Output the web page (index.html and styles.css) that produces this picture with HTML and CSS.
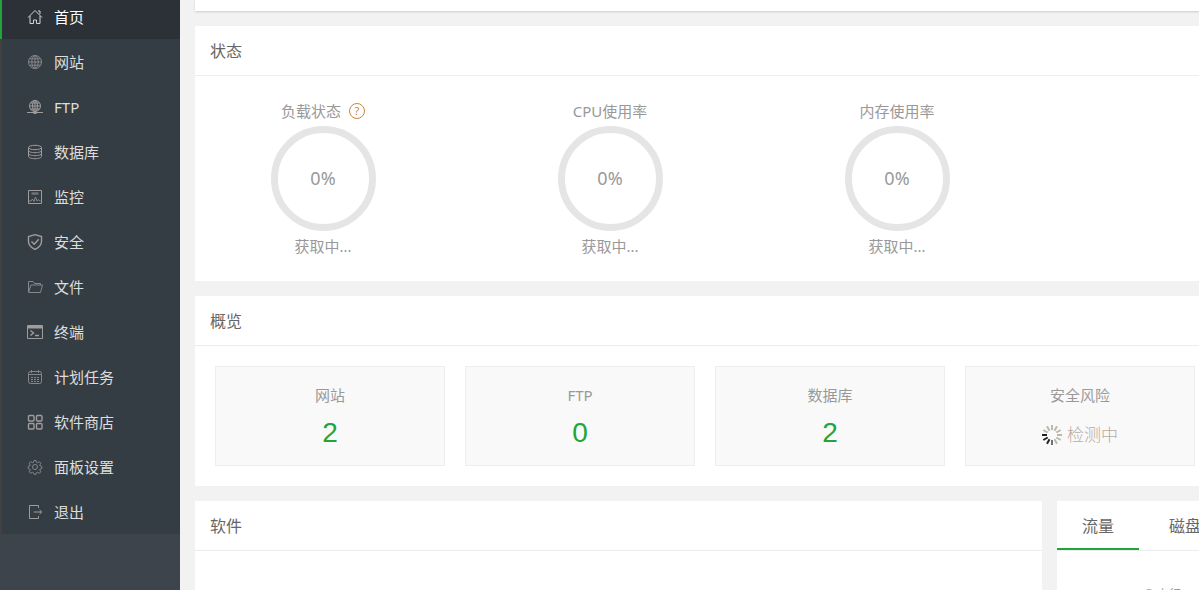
FILE: index.html
```html
<!DOCTYPE html>
<html lang="zh-CN">
<head>
	<meta charset="utf-8">
	<title>首页</title>
	<link rel="stylesheet" href="styles.css">
</head>
<body>
	<div class="layout">
		<nav class="sidebar">
			<ul class="menu">
				<li class="current"><a href="#home">
					<svg class="icon" viewBox="0 0 16 16"><path d="M1 8.5 8 1.5l7 7M3 7v7.5h3.5V11h3v3.5H13V7M11 2h2v3"/></svg>首页</a></li>
				<li><a href="#site">
					<svg class="icon dim" viewBox="0 0 16 16"><circle cx="8" cy="8" r="6.5"/><ellipse cx="8" cy="8" rx="3.2" ry="6.5"/><path d="M8 1.5v13M1.5 8h13M2.5 4.8h11M2.5 11.2h11"/></svg>网站</a></li>
				<li><a href="#ftp">
					<svg class="icon" viewBox="0 0 16 16"><circle cx="8" cy="7" r="5.5"/><ellipse cx="8" cy="7" rx="2.5" ry="5.5"/><path d="M8 1.5v12M2.5 7h11M3.5 4h9M3.5 10h9M0 13.5h16M6.5 14.5h3"/></svg>FTP</a></li>
				<li><a href="#database">
					<svg class="icon" viewBox="0 0 16 16"><ellipse cx="8" cy="3.5" rx="6.5" ry="2.2"/><path d="M1.5 3.5v9c0 1.2 2.9 2.2 6.5 2.2s6.5-1 6.5-2.2v-9M1.5 6.5c0 1.2 2.9 2.2 6.5 2.2s6.5-1 6.5-2.2M1.5 9.5c0 1.2 2.9 2.2 6.5 2.2s6.5-1 6.5-2.2"/></svg>数据库</a></li>
				<li><a href="#control">
					<svg class="icon dim" viewBox="0 0 16 16"><path stroke="#a09c9c" d="M1.5 1.5h13v13h-13z"/><path d="M4.500 4h7M4.500 5h7M2 12h2l1.500-2 1.500 2.500 1.500-4.500 1.500 4 1.500-1.500 1 1.500h1"/></svg>监控</a></li>
				<li><a href="#firewall">
					<svg class="icon bold" viewBox="0 0 16 16"><path d="M8 .7 14.5 2.5v5c0 3.500-2.500 6-6.500 8-4-2-6.500-4.500-6.500-8v-5zM4.500 7.500l2.700 2.800 4.500-5"/></svg>安全</a></li>
				<li><a href="#files">
					<svg class="icon dim" viewBox="0 0 16 16"><path d="M1.500 13V2.500h4.500l1.500 2h6V6M1.500 13.500 4 6h11.500l-2 7.500z"/></svg>文件</a></li>
				<li><a href="#term">
					<svg class="icon" viewBox="0 0 16 16"><path d="M.5 1.500h15v13H.5z"/><path d="M1 3h14" stroke-width="3"/><path class="bold" d="M3.500 6.500l3 2.500-3 2.500M8 11.500h4"/></svg>终端</a></li>
				<li><a href="#crontab">
					<svg class="icon dim" viewBox="0 0 16 16"><rect x="1.5" y="2.5" width="13" height="12" rx="2"/><path d="M4.500 1v3M11.500 1v3M1.500 5.500h13"/><path stroke-dasharray="2 1" d="M4 8.500h9M4 10.500h9M4 12.500h9"/></svg>计划任务</a></li>
				<li><a href="#soft">
					<svg class="icon bold" viewBox="0 0 16 16"><rect x="1.5" y="1.5" width="5.5" height="5.5" rx="1"/><rect x="9.5" y="1.5" width="5.5" height="5.5" rx="1"/><rect x="1.5" y="9.5" width="5.5" height="5.5" rx="1"/><rect x="9.5" y="9.5" width="5.5" height="5.5" rx="1"/></svg>软件商店</a></li>
				<li><a href="#config">
					<svg class="icon dim" viewBox="0 0 16 16"><circle cx="8" cy="8" r="2.5"/><path d="M6.500 3.300 7 1.500h2l.5 1.800 1 .4 1.800-1 1.500 1.500-1 1.800.4 1 1.600.5v2l-1.600.5-.4 1 1 1.800-1.500 1.500-1.800-1-1 .4-.5 1.600H7l-.5-1.600-1-.4-1.800 1-1.500-1.500 1-1.800-.4-1-1.600-.5v-2l1.600-.5.4-1-1-1.800 1.500-1.500 1.800 1z"/></svg>面板设置</a></li>
				<li><a href="#logout">
					<svg class="icon" viewBox="0 0 16 16"><path d="M11.500 4V1.500h-9v13h9V12M6.500 8h8M12.500 6l2.300 2-2.300 2"/></svg>退出</a></li>
			</ul>
		</nav>
		<main class="main">
			<div class="topbar"></div>
			<section class="panel">
				<h2 class="panel-title">状态</h2>
				<div class="gauges">
					<div class="gauge">
						<h3>负载状态 <a class="help" href="#help">?</a></h3>
						<div class="ring">0%</div>
						<p>获取中...</p>
					</div>
					<div class="gauge">
						<h3>CPU使用率</h3>
						<div class="ring">0%</div>
						<p>获取中...</p>
					</div>
					<div class="gauge">
						<h3>内存使用率</h3>
						<div class="ring">0%</div>
						<p>获取中...</p>
					</div>
				</div>
			</section>
			<section class="panel">
				<h2 class="panel-title">概览</h2>
				<div class="cards">
					<div class="card"><h3>网站</h3><a class="count" href="#site">2</a></div>
					<div class="card"><h3>FTP</h3><a class="count" href="#ftp">0</a></div>
					<div class="card"><h3>数据库</h3><a class="count" href="#database">2</a></div>
					<div class="card">
						<h3>安全风险</h3>
						<div class="checking">
							<svg class="spinner" viewBox="0 0 20 20">
								<path stroke="#b9b9ae" d="M10 0v5M15 1.300l-2.500 4.400M18.700 5l-4.400 2.500M20 10h-5M18.700 15l-4.400-2.500M15 18.700l-2.500-4.400M5 1.300l2.500 4.400M1.300 5l4.400 2.500"/>
								<path stroke="#77706e" d="M10 20v-5"/>
								<path stroke="#222" d="M0 10h5M1.300 15l4.400-2.500M5 18.700l2.500-4.400"/>
							</svg>检测中
						</div>
					</div>
				</div>
			</section>
			<div class="bottom">
				<section class="panel">
					<h2 class="panel-title">软件</h2>
				</section>
				<section class="panel">
					<div class="tabs">
						<button class="tab on" type="button">流量</button>
						<button class="tab" type="button">磁盘IO</button>
					</div>
					<div class="legend"><span class="dot"></span>上行</div>
				</section>
			</div>
		</main>
	</div>
</body>
</html>
```
FILE: styles.css
```css
* { box-sizing: border-box; }
body { margin: 0; overflow: hidden; background: #f2f2f2; color: #999; font: 15px/20px "Noto Sans", "Noto Sans CJK SC", sans-serif; }
h2, h3, p, ul { margin: 0; padding: 0; font-weight: normal; }
a { text-decoration: none; }
.layout { display: flex; height: 100vh; overflow: hidden; }

/* sidebar */
.sidebar { flex: none; width: 180px; background: #3d444b; }
.menu { list-style: none; margin-top: -6px; }
.menu li { height: 45px; background: #353d44; border-left: 2px solid #444040; }
.menu a { display: flex; align-items: center; gap: 11px; height: 45px; padding-left: 25px; color: #ddd; }
.menu .current { background: #2c3138; border-left-color: #20a53a; }
.menu .current a { color: #fff; }
.icon { width: 16px; height: 16px; fill: none; stroke: #a09c9c; stroke-width: 1; }
.dim { stroke: #86878a; }
.bold { stroke-width: 1.4; }
.current .icon { stroke: #d5d5d5; }

/* content */
.main { flex: 1; display: flex; flex-direction: column; gap: 15px; min-width: 0; padding-left: 15px; }
.topbar { flex: none; height: 11px; background: #fff; box-shadow: 0 1px 2px #ccc; }
.panel { flex: none; min-width: 0; overflow: hidden; background: #fff; }
.panel-title { height: 50px; padding-left: 15px; border-bottom: 1px solid #ededed; color: #666; font-size: 16px; line-height: 50px; }

.gauges { display: grid; grid-template-columns: repeat(3, 256px); gap: 31px; padding: 25px 0; }
.gauge { display: flex; flex-direction: column; align-items: center; gap: 5px; }
.gauge h3 { display: flex; align-items: center; gap: 8px; font-size: 15px; }
.help { width: 16px; height: 16px; border: 1px solid #c8873c; border-radius: 50%; color: #c8873c; font-size: 11px; line-height: 14px; text-align: center; }
.ring { width: 105px; height: 105px; border: 7px solid #e5e5e5; border-radius: 50%; font-size: 18px; line-height: 91px; text-align: center; }

.cards { display: grid; grid-template-columns: repeat(4, 1fr); gap: 20px; padding: 20px 4px 20px 20px; }
.card { height: 100px; padding-top: 18px; background: #f9f9f9; border: 1px solid #eee; text-align: center; }
.card h3 { font-size: 15px; }
.count { display: block; color: #20a53a; font: 28px/56px "Liberation Sans", sans-serif; }
.checking { display: flex; align-items: center; justify-content: center; gap: 5px; height: 60px; color: #b8aaa0; font-size: 17px; font-weight: 300; }
.spinner { width: 20px; height: 20px; fill: none; stroke-width: 2; }

.bottom { flex: 1; display: grid; grid-template-columns: 1fr 142px; gap: 15px; min-height: 0; }
.bottom .panel { min-height: 0; }
.tabs { display: flex; gap: 5px; height: 50px; border-bottom: 1px solid #ededed; }
.tab { flex: none; padding: 2px 25px 0; border: 0; border-bottom: 2px solid transparent; background: none; color: #666; font: inherit; font-size: 16px; }
.tab.on { border-bottom-color: #20a53a; }
.legend { display: flex; align-items: flex-start; gap: 3px; padding: 34px 0 0 87px; font-size: 12px; }
.dot { width: 10px; height: 10px; margin-top: 4px; border-radius: 50%; background: #e0a050; }
```
